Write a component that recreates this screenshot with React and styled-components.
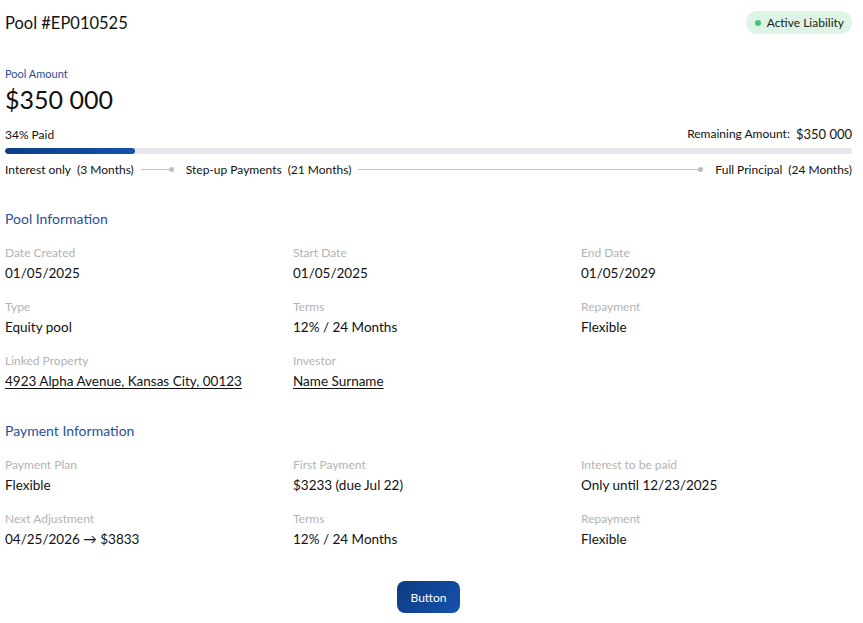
import styled, { createGlobalStyle } from "styled-components";

const GlobalStyle = createGlobalStyle`
  body {
    margin: 0;
    background: #ffffff;
    font-family: "Lato", "Noto Sans", sans-serif;
    color: #111111;
  }
`;

const Page = styled.div`
  padding: 0 11px 0 5px;
  display: flex;
  flex-direction: column;
`;
const Header = styled.div`
  display: flex;
  justify-content: space-between;
  align-items: center;
  height: 45px;
`;
const Title = styled.h1`
  margin: 0;
  font-size: 16.5px;
  font-weight: 400;
`;
const Badge = styled.div`
  display: flex;
  align-items: center;
  gap: 6px;
  height: 23px;
  padding: 0 8px 0 9px;
  border-radius: 12px;
  background: #def5e6;
  font-size: 12px;
  color: #1b1b1b;
`;
const Dot = styled.span`
  width: 6px;
  height: 6px;
  border-radius: 50%;
  background: ${(p) => p.color || "#43c579"};
`;
const AmountLabel = styled.div`
  margin-top: 22px;
  font-size: 11px;
  color: #1f4f9d;
`;
const Amount = styled.div`
  margin-top: 4px;
  font-size: 25px;
  line-height: 30px;
`;
const ProgressHead = styled.div`
  display: flex;
  justify-content: space-between;
  align-items: center;
  margin-top: 12px;
  font-size: 12px;
`;
const Remaining = styled.span`
  display: flex;
  gap: 6px;
  b {
    font-weight: 400;
    font-size: 13px;
  }
`;
const Track = styled.div`
  margin-top: 6px;
  height: 6px;
  border-radius: 3px;
  background: #e6e7ec;
  overflow: hidden;
`;
const Fill = styled.div`
  height: 100%;
  border-radius: 3px;
  background: linear-gradient(90deg, #0d3f86, #1452ab);
`;
const Timeline = styled.div`
  display: flex;
  align-items: center;
  margin-top: 8px;
  font-size: 12px;
`;
const Stage = styled.span`
  display: flex;
  gap: 6px;
  white-space: nowrap;
`;
const Connector = styled.div`
  display: flex;
  align-items: center;
  margin: 0 12px 0 7px;
  ${(p) => (p.grow ? "flex: 1;" : `width: ${p.width}px;`)}
  &::before {
    content: "";
    flex: 1;
    height: 1px;
    background: #c4c4c4;
  }
  &::after {
    content: "";
    width: 5px;
    height: 5px;
    border-radius: 50%;
    background: #bdbdbd;
  }
`;
const SectionTitle = styled.h2`
  margin: ${(p) => p.top}px 0 0;
  font-size: 14px;
  font-weight: 400;
  color: #1f4f9d;
`;
const Grid = styled.div`
  display: grid;
  grid-template-columns: repeat(3, 1fr);
  column-gap: 17px;
  row-gap: 17px;
  margin-top: 18px;
`;
const Field = styled.div`
  display: flex;
  flex-direction: column;
  gap: 4px;
`;
const Label = styled.span`
  font-size: 12px;
  color: #b3b3b3;
  line-height: 16px;
`;
const Value = styled.span`
  font-size: 13.5px;
  line-height: 17px;
  color: #111111;
  text-decoration: ${(p) => (p.link ? "underline" : "none")};
  text-underline-offset: 2px;
`;
const Footer = styled.div`
  display: flex;
  justify-content: center;
  margin-top: 33px;
`;
const Button = styled.button`
  width: 63px;
  height: 32px;
  border: none;
  border-radius: 8px;
  background: linear-gradient(135deg, #0c3b80, #1652ad);
  color: #ffffff;
  font-family: inherit;
  font-size: 12px;
  cursor: pointer;
`;

const poolInfo = [
  { label: "Date Created", value: "01/05/2025" },
  { label: "Start Date", value: "01/05/2025" },
  { label: "End Date", value: "01/05/2029" },
  { label: "Type", value: "Equity pool" },
  { label: "Terms", value: "12% / 24 Months" },
  { label: "Repayment", value: "Flexible" },
  { label: "Linked Property", value: "4923 Alpha Avenue, Kansas City, 00123", link: true },
  { label: "Investor", value: "Name Surname", link: true },
];

const paymentInfo = [
  { label: "Payment Plan", value: "Flexible" },
  { label: "First Payment", value: "$3233 (due Jul 22)" },
  { label: "Interest to be paid", value: "Only until 12/23/2025" },
  { label: "Next Adjustment", value: "04/25/2026 → $3833" },
  { label: "Terms", value: "12% / 24 Months" },
  { label: "Repayment", value: "Flexible" },
];

function InfoGrid({ items }) {
  return (
    <Grid>
      {items.map((item, i) => (
        <Field key={i}>
          <Label>{item.label}</Label>
          <Value link={item.link}>{item.value}</Value>
        </Field>
      ))}
    </Grid>
  );
}

export default function App() {
  const paidWidth = 130 / 847;
  return (
    <>
      <GlobalStyle />
      <Page>
        <Header>
          <Title>Pool #EP010525</Title>
          <Badge>
            <Dot />
            Active Liability
          </Badge>
        </Header>
        <AmountLabel>Pool Amount</AmountLabel>
        <Amount>$350 000</Amount>
        <ProgressHead>
          <span>34% Paid</span>
          <Remaining>
            Remaining Amount: <b>$350 000</b>
          </Remaining>
        </ProgressHead>
        <Track>
          <Fill style={{ width: `${paidWidth * 100}%` }} />
        </Track>
        <Timeline>
          <Stage>
            <span>Interest only</span>
            <span>(3 Months)</span>
          </Stage>
          <Connector width={33} />
          <Stage>
            <span>Step-up Payments</span>
            <span>(21 Months)</span>
          </Stage>
          <Connector grow />
          <Stage>
            <span>Full Principal</span>
            <span>(24 Months)</span>
          </Stage>
        </Timeline>
        <SectionTitle top={33}>Pool Information</SectionTitle>
        <InfoGrid items={poolInfo} />
        <SectionTitle top={32}>Payment Information</SectionTitle>
        <InfoGrid items={paymentInfo} />
        <Footer>
          <Button>Button</Button>
        </Footer>
      </Page>
    </>
  );
}
